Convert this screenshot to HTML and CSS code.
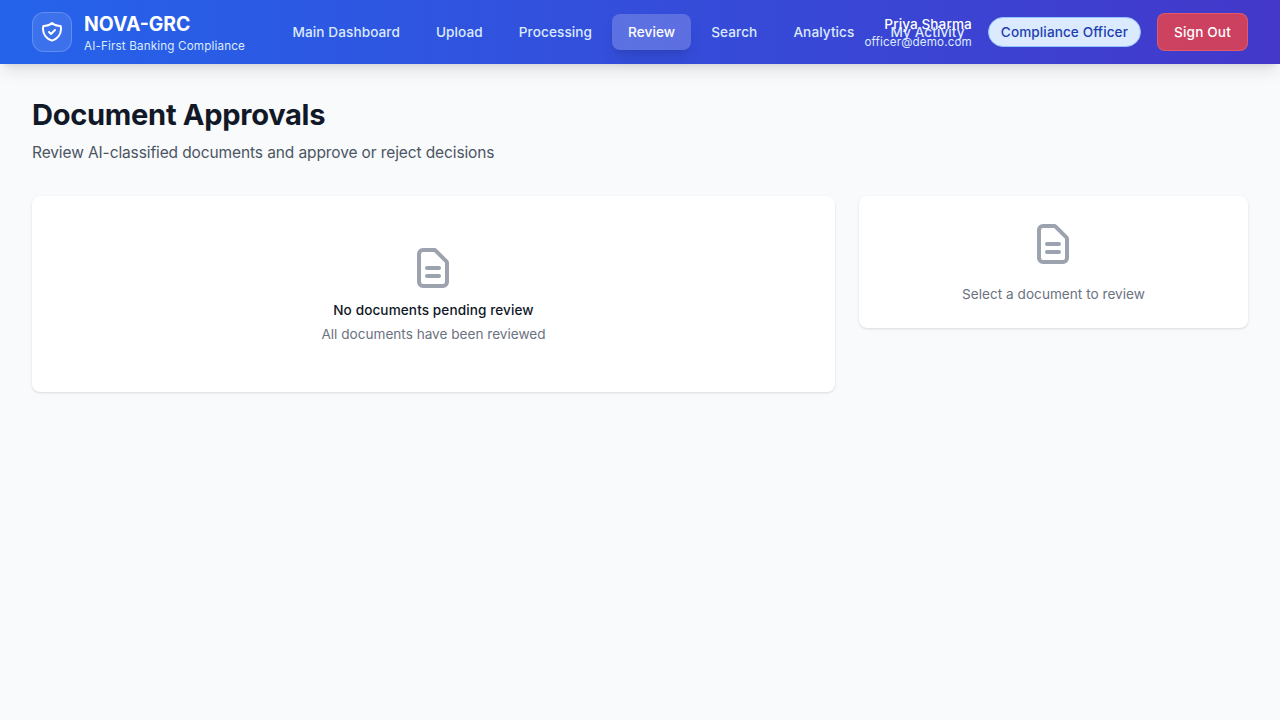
FILE: index.html
```html
<!DOCTYPE html>
<html lang="en">
<head>
<meta charset="utf-8">
<title>NOVA-GRC</title>
<link rel="stylesheet" href="styles.css">
</head>
<body>
<header class="topbar">
  <div class="brand">
    <div class="brand-mark">
      <svg viewBox="0 0 24 24"><path d="M9 12l2 2 4-4m5.618-4.016A11.955 11.955 0 0112 2.944a11.955 11.955 0 01-8.618 3.04A12.02 12.02 0 003 9c0 5.591 3.824 10.29 9 11.622 5.176-1.332 9-6.03 9-11.622 0-1.042-.133-2.052-.382-3.016z"/></svg>
    </div>
    <div>
      <div class="brand-name">NOVA-GRC</div>
      <div class="brand-sub">AI-First Banking Compliance</div>
    </div>
  </div>
  <nav class="nav">
    <a class="nav-link">Main Dashboard</a>
    <a class="nav-link">Upload</a>
    <a class="nav-link">Processing</a>
    <a class="nav-link active">Review</a>
    <a class="nav-link">Search</a>
    <a class="nav-link">Analytics</a>
    <a class="nav-link">My Activity</a>
  </nav>
  <div class="account">
    <div class="user">
      <div class="user-name">Priya Sharma</div>
      <div class="user-mail">officer@demo.com</div>
    </div>
    <span class="role">Compliance Officer</span>
    <button class="signout">Sign Out</button>
  </div>
</header>
<main class="page">
  <h1 class="title">Document Approvals</h1>
  <p class="subtitle">Review AI-classified documents and approve or reject decisions</p>
  <div class="columns">
    <section class="card list">
      <svg class="doc" viewBox="0 0 24 24"><path d="M9 12h6m-6 4h6m2 5H7a2 2 0 01-2-2V5a2 2 0 012-2h5.586a1 1 0 01.707.293l5.414 5.414a1 1 0 01.293.707V19a2 2 0 01-2 2z"/></svg>
      <h3 class="empty-title">No documents pending review</h3>
      <p class="empty-text">All documents have been reviewed</p>
    </section>
    <section class="card detail">
      <svg class="doc" viewBox="0 0 24 24"><path d="M9 12h6m-6 4h6m2 5H7a2 2 0 01-2-2V5a2 2 0 012-2h5.586a1 1 0 01.707.293l5.414 5.414a1 1 0 01.293.707V19a2 2 0 01-2 2z"/></svg>
      <p class="detail-text">Select a document to review</p>
    </section>
  </div>
</main>
</body>
</html>
```
FILE: styles.css
```css
* { box-sizing: border-box; }
body { margin: 0; min-height: 100vh; background: #f9fafb; color: #111827; font-family: Inter, "Liberation Sans", sans-serif; }
h1, h3, p { margin: 0; }
svg { display: block; fill: none; stroke: currentColor; stroke-width: 2; stroke-linecap: round; stroke-linejoin: round; }
.topbar { display: flex; align-items: center; justify-content: space-between; height: 64px; padding: 0 32px; background: linear-gradient(to right, #2563eb, #4338ca); box-shadow: 0 10px 15px -3px rgba(0,0,0,.1), 0 4px 6px -4px rgba(0,0,0,.1); }
.brand { display: flex; align-items: center; gap: 12px; flex: none; width: 212px; white-space: nowrap; }
.brand-mark { display: flex; align-items: center; justify-content: center; flex: none; width: 40px; height: 40px; border: 1px solid rgba(255,255,255,.2); border-radius: 12px; background: rgba(255,255,255,.1); color: #fff; }
.brand-mark svg { width: 24px; height: 24px; }
.brand-name { padding-top: 1px; color: #fff; font-size: 19.4px; line-height: 27px; font-weight: 700; }
.brand-sub { color: #dbeafe; font-size: 11.65px; line-height: 16px; letter-spacing: .16px; }
.nav { display: flex; flex: 1 1 0; min-width: 0; gap: 4px; margin-left: 32.5px; white-space: nowrap; }
.nav-link { flex: none; padding: 8px 16px; border-radius: 8px; color: #dbeafe; font-size: 13.6px; line-height: 20px; font-weight: 500; letter-spacing: .085px; }
.nav-link.active { background: rgba(255,255,255,.2); color: #fff; box-shadow: 0 10px 15px -3px rgba(0,0,0,.1), 0 4px 6px -4px rgba(0,0,0,.1); }
.account { display: flex; align-items: center; gap: 16px; flex: none; white-space: nowrap; }
.user { text-align: right; }
.user-name { color: #fff; font-size: 13.6px; line-height: 20px; font-weight: 500; letter-spacing: .08px; }
.user-mail { color: #dbeafe; font-size: 11.65px; line-height: 16px; letter-spacing: .13px; }
.role { padding: 4px 12px; border: 1px solid #93c5fd; border-radius: 15px; background: #dbeafe; color: #1e40af; font-size: 13.6px; line-height: 20px; font-weight: 500; letter-spacing: .085px; }
.signout { width: 91px; padding: 8px 0; border: 1px solid rgba(248,113,113,.5); border-radius: 8px; background: rgba(239,68,68,.8); color: #fff; font: 500 13.6px/20px Inter, sans-serif; letter-spacing: .15px; }
.page { padding: 32px; }
.title { padding-top: 1px; font-size: 29.1px; line-height: 35px; font-weight: 700; letter-spacing: -.31px; }
.subtitle { margin-top: 9px; color: #4b5563; font-size: 15.5px; line-height: 24px; letter-spacing: -.11px; }
.columns { display: grid; grid-template-columns: 803px 389px; gap: 24px; align-items: start; margin-top: 31px; }
.card { display: flex; flex-direction: column; align-items: center; border-radius: 8px; background: #fff; box-shadow: 0 1px 3px rgba(0,0,0,.1), 0 1px 2px -1px rgba(0,0,0,.1); text-align: center; }
.list { padding: 48px; }
.detail { padding: 24px; }
.doc { width: 48px; height: 48px; margin-right: 1px; color: #9ca3af; }
.empty-title { margin-top: 8px; font-size: 13.6px; line-height: 20px; font-weight: 500; letter-spacing: .09px; }
.empty-text { margin-top: 4px; color: #6b7280; font-size: 13.6px; line-height: 20px; }
.detail-text { margin-top: 16px; color: #6b7280; font-size: 13.6px; line-height: 20px; letter-spacing: .02px; }
```
